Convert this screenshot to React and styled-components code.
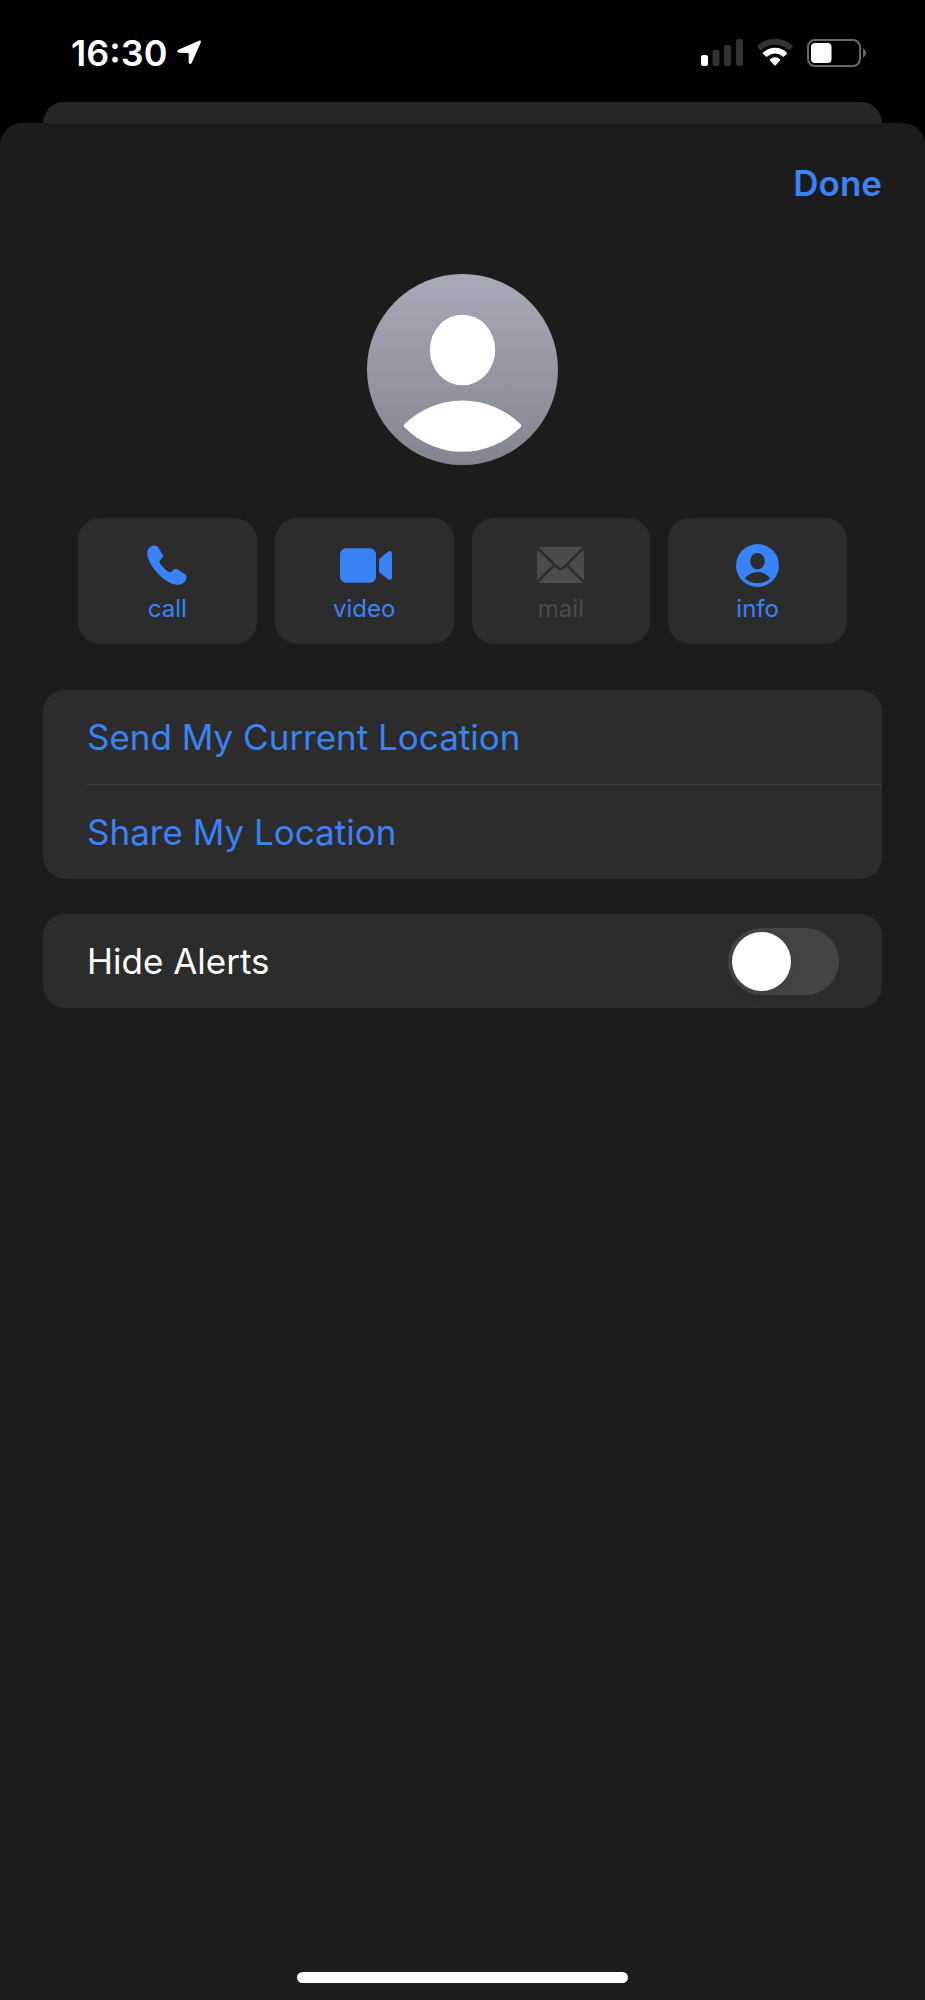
import React, { useState } from 'react';
import styled, { createGlobalStyle, ThemeProvider } from 'styled-components';

const theme = {
   accent: '#3a82f7',
   sheet: '#1c1c1c',
   sheetBehind: '#262626',
   card: '#2c2c2c',
   divider: '#3d3d3f',
   disabled: '#4b4b4d',
   track: '#444446',
   text: '#ffffff',
};

const LocationArrow = () => (
   <svg width="24" height="25" viewBox="0 0 72 75" fill="#fff" aria-hidden="true">
      <path d="M66 2 L4 29 C-1 32 0 38 5 38 L31 39 C34 39 35 40 35 43 L35 67 C35 73 41 74 44 69 L71 8 C73 3 70 0 66 2 Z" />
   </svg>
);

const Signal = () => (
   <svg width="42" height="27" viewBox="0 0 42 27" fill="#323232" role="img" aria-label="Signal">
      <rect x="0" y="16" width="7" height="11" rx="2" fill="#fff" />
      <rect x="11.5" y="11" width="7" height="16" rx="2" />
      <rect x="23" y="6" width="7" height="21" rx="2" />
      <rect x="35" y="0" width="7" height="27" rx="2" />
   </svg>
);

const Wifi = () => (
   <svg width="36" height="27" viewBox="0 0 36 27" fill="#fff" role="img" aria-label="Wi-Fi">
      <path
         fill="#323232"
         d="M.4 6.7 A26 26 0 0 1 35.6 6.7 Q36.2 7.4 35.6 8 L33 10.8 Q32.3 11.4 31.6 10.8 A20.5 20.5 0 0 0 4.4 10.8 Q3.7 11.4 3 10.8 L.4 8 Q-.2 7.4 .4 6.7 Z"
      />
      <path d="M6.2 13.6 A16.8 16.8 0 0 1 29.8 13.6 Q30.4 14.3 29.8 14.9 L27 17.6 Q26.4 18 25.7 17.5 A11.4 11.4 0 0 0 10.3 17.5 Q9.6 18 9 17.6 L6.2 14.9 Q5.6 14.3 6.2 13.6 Z" />
      <path d="M13 20.2 A7.6 7.6 0 0 1 23 20.2 Q23.7 20.9 23 21.6 L18.7 26.2 Q18 26.9 17.3 26.2 L13 21.6 Q12.3 20.9 13 20.2 Z" />
   </svg>
);

const Battery = () => (
   <svg width="59" height="28" viewBox="0 0 59 28" role="img" aria-label="Battery">
      <rect x="1" y="1" width="52" height="26" rx="7" fill="none" stroke="#686868" strokeWidth="2" />
      <rect x="4" y="4" width="20.5" height="20" rx="4" fill="#fff" />
      <path d="M56 9.5 Q59 11 59 14 Q59 17 56 18.5 Z" fill="#686868" />
   </svg>
);

const Phone = () => (
   <svg width="40" height="40" viewBox="0 0 120 121" fill="currentColor" aria-hidden="true">
      <path d="M14 3 C22 -1 30 2 34 8 L46 27 C50 33 49 36 45 40 L39 46 C37 49 37 51 39 55 C46 66 56 76 66 82 C69 84 71 84 73 82 L79 76 C83 72 88 71 92 74 L113 88 C120 93 121 98 118 104 C112 117 98 123 82 119 C48 111 8 64 1 34 C-1 20 2 8 14 3 Z" />
   </svg>
);

// the camera body sits slightly right of centre, so the drawing has room on its left
const Video = () => (
   <svg width="56" height="35" viewBox="-12 0 168 105" fill="currentColor" aria-hidden="true">
      <rect x="0" y="1" width="108" height="103" rx="18" />
      <path d="M117 37 Q117 34 120 31 L143 12 Q148 8 152 10 Q156 11 156 17 L156 88 Q156 94 152 96 Q148 97 143 93 L120 74 Q117 71 117 68 Z" />
   </svg>
);

const Mail = () => (
   <svg width="47" height="36" viewBox="0 0 141 108" aria-hidden="true">
      <rect width="141" height="108" rx="4" fill="currentColor" />
      <g fill="none" stroke={theme.card} strokeWidth="8">
         <path d="M-2 0 L58 58 Q70 74 83 58 L143 0" />
         <path d="M-2 108 L50 56 M143 108 L91 56" />
      </g>
   </svg>
);

const Info = () => (
   <svg width="43" height="43" viewBox="0 0 132 132" aria-hidden="true">
      <circle cx="66" cy="66" r="66" fill="currentColor" />
      <g fill={theme.card}>
         <ellipse cx="66" cy="53" rx="22.5" ry="25" />
         <path d="M27 106 A48 48 0 0 1 105 106 A60 60 0 0 1 27 106 Z" />
      </g>
   </svg>
);

const ContactPhoto = () => (
   <svg width="191" height="191" viewBox="0 0 573 573" role="img" aria-label="Contact">
      <defs>
         <linearGradient id="photo" x1="0" y1="0" x2="0" y2="1">
            <stop offset="0" stopColor="#a7aab8" />
            <stop offset="1" stopColor="#82868f" />
         </linearGradient>
      </defs>
      <circle cx="286.5" cy="286.5" r="286.5" fill="url(#photo)" />
      <g fill="#fff">
         <ellipse cx="286.5" cy="228" rx="98" ry="106" />
         <path d="M112 451 A249 249 0 0 1 461 451 Q464 455 461 459 A242 242 0 0 1 112 459 Q109 455 112 451 Z" />
      </g>
   </svg>
);

const actions = [
   { label: 'call', icon: Phone },
   { label: 'video', icon: Video },
   { label: 'mail', icon: Mail, disabled: true },
   { label: 'info', icon: Info },
];

const App = () => {
   const [hideAlerts, setHideAlerts] = useState(false);

   return (
      <ThemeProvider theme={theme}>
         <GlobalStyle />
         <Screen>
            <StatusBar>
               <Clock>
                  <time>16:30</time>
                  <LocationArrow />
               </Clock>
               <StatusIcons>
                  <Signal />
                  <Wifi />
                  <Battery />
               </StatusIcons>
            </StatusBar>
            <SheetBehind />
            <Sheet>
               <Header>
                  <DoneButton type="button">Done</DoneButton>
               </Header>
               <Photo>
                  <ContactPhoto />
               </Photo>
               <Actions>
                  {actions.map(({ label, icon: Icon, disabled }) => (
                     <ActionButton key={label} type="button" disabled={disabled}>
                        <span className="icon">
                           <Icon />
                        </span>
                        {label}
                     </ActionButton>
                  ))}
               </Actions>
               <Groups>
                  <Group>
                     <LinkRow type="button">Send My Current Location</LinkRow>
                     <Divider />
                     <LinkRow type="button">Share My Location</LinkRow>
                  </Group>
                  <Group>
                     <SwitchRow>
                        <label htmlFor="hide-alerts">Hide Alerts</label>
                        <Switch
                           id="hide-alerts"
                           type="checkbox"
                           role="switch"
                           checked={hideAlerts}
                           onChange={(e) => setHideAlerts(e.target.checked)}
                        />
                     </SwitchRow>
                  </Group>
               </Groups>
               <HomeIndicator />
            </Sheet>
         </Screen>
      </ThemeProvider>
   );
};

export default App;

const GlobalStyle = createGlobalStyle`
   * {
      box-sizing: border-box;
   }
   body {
      margin: 0;
      background: #000;
      font-family: Inter, "Liberation Sans", sans-serif;
      color: ${(props) => props.theme.text};
   }
   button {
      margin: 0;
      padding: 0;
      border: none;
      background: none;
      font: inherit;
      color: ${(props) => props.theme.accent};
      cursor: pointer;
   }
   svg {
      display: block;
   }
`;

const Screen = styled.div`
   display: flex;
   flex-direction: column;
   min-height: 100vh;
`;

const StatusBar = styled.header`
   display: flex;
   align-items: center;
   justify-content: space-between;
   height: 102px;
   padding: 3px 59px 0 71px;
`;

const Clock = styled.div`
   display: flex;
   align-items: center;
   gap: 10px;
   font-size: 36px;
   font-weight: 600;
   line-height: 44px;
`;

const StatusIcons = styled.div`
   display: flex;
   align-items: center;
   gap: 14px;
`;

const SheetBehind = styled.div`
   height: 21px;
   margin: 0 43px;
   border-radius: 21px 21px 0 0;
   background: ${(props) => props.theme.sheetBehind};
`;

const Sheet = styled.main`
   flex: 1;
   display: flex;
   flex-direction: column;
   border-radius: 22px 22px 0 0;
   background: ${(props) => props.theme.sheet};
`;

const Header = styled.div`
   display: flex;
   justify-content: flex-end;
   padding: 38px 43px 0;
`;

const DoneButton = styled.button`
   && {
      font-size: 35px;
      font-weight: 600;
      line-height: 44px;
   }
`;

const Photo = styled.div`
   display: flex;
   justify-content: center;
   padding: 69px 0 53px;
`;

const Actions = styled.div`
   display: grid;
   grid-template-columns: repeat(4, 1fr);
   gap: 18px;
   padding: 0 78px;
`;

const ActionButton = styled.button`
   && {
      display: flex;
      flex-direction: column;
      align-items: center;
      gap: 8px;
      padding: 25px 0 21px;
      border-radius: 22px;
      background: ${(props) => props.theme.card};
      font-size: 24px;
      line-height: 28px;
   }
   .icon {
      display: flex;
      align-items: center;
      height: 44px;
   }
   &&:disabled {
      color: ${(props) => props.theme.disabled};
      cursor: default;
   }
`;

const Groups = styled.div`
   display: flex;
   flex-direction: column;
   gap: 35px;
   padding: 46px 43px;
`;

const Group = styled.section`
   display: flex;
   flex-direction: column;
   border-radius: 22px;
   background: ${(props) => props.theme.card};
   font-size: 35px;
   line-height: 44px;
`;

const LinkRow = styled.button`
   && {
      padding: 25px 44px;
      text-align: left;
   }
`;

const Divider = styled.hr`
   width: calc(100% - 44px);
   height: 1px;
   margin: 0 0 0 44px;
   border: none;
   background: ${(props) => props.theme.divider};
`;

const SwitchRow = styled.div`
   display: flex;
   align-items: center;
   justify-content: space-between;
   height: 94px;
   padding: 0 43px 0 44px;
`;

const Switch = styled.input`
   appearance: none;
   display: flex;
   width: 111px;
   height: 67px;
   margin: 0;
   padding: 4px;
   border-radius: 34px;
   background: ${(props) => props.theme.track};
   cursor: pointer;
   &::before {
      content: '';
      width: 59px;
      height: 59px;
      border-radius: 50%;
      background: #fff;
      box-shadow: 0 4px 12px rgba(0, 0, 0, 0.08);
   }
   &:checked {
      justify-content: flex-end;
      background: #30d158;
   }
`;

const HomeIndicator = styled.div`
   width: 331px;
   max-width: 60%;
   height: 11px;
   margin: auto auto 17px;
   border-radius: 6px;
   background: #fff;
`;
